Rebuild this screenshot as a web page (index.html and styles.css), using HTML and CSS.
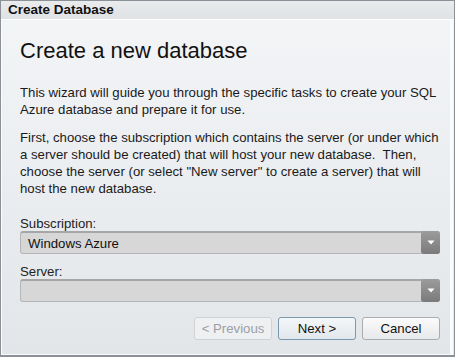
FILE: index.html
```html
<!DOCTYPE html>
<html lang="en">

<head>
    <meta charset="UTF-8">
    <title>Create Database</title>
    <link rel="stylesheet" href="styles.css">
</head>

<body>
    <div class="dialog">
        <div class="title-bar">Create Database</div>
        <div class="content">
            <h1 class="heading">Create a new database</h1>
            <p>This wizard will guide you through the specific tasks to create your SQL<br>
                Azure database and prepare it for use.</p>
            <p>First, choose the subscription which contains the server (or under which<br>
                a server should be created) that will host your new database.&nbsp; Then,<br>
                choose the server (or select "New server" to create a server) that will<br>
                host the new database.</p>

            <div class="field first">
                <label>Subscription:</label>
                <div class="dropdown">
                    <span class="value">Windows Azure</span>
                    <span class="arrow"><svg width="8" height="5" viewBox="0 0 8 5"><path d="M0.5 0.5 L7.5 0.5 L4 4.5 Z" fill="#fff"/></svg></span>
                </div>
            </div>

            <div class="field">
                <label>Server:</label>
                <div class="dropdown">
                    <span class="value"></span>
                    <span class="arrow"><svg width="8" height="5" viewBox="0 0 8 5"><path d="M0.5 0.5 L7.5 0.5 L4 4.5 Z" fill="#fff"/></svg></span>
                </div>
            </div>

            <div class="buttons">
                <button class="btn disabled">&lt; Previous</button>
                <button class="btn default">Next &gt;</button>
                <button class="btn">Cancel</button>
            </div>
        </div>
    </div>
</body>

</html>
```

FILE: styles.css
```css
body {
    margin: 0;
    padding: 0;
    font-family: "Liberation Sans", Arial, sans-serif;
    font-size: 13.2px;
    color: #1a1a1a;
}

.dialog {
    width: 455px;
    height: 357px;
    box-sizing: border-box;
    border: 1px solid #8c9198;
    border-bottom-width: 2px;
    background: linear-gradient(to bottom, #f3f5f7, #e3e6e9);
    display: flex;
    flex-direction: column;
}

.title-bar {
    height: 18px;
    line-height: 18px;
    padding-left: 7px;
    font-weight: bold;
    font-size: 13.5px;
    color: #111;
    background: linear-gradient(to bottom, #e9ebed, #dfe2e5);
    border-bottom: 1px solid #fff;
}

.content {
    flex: 1;
    padding: 0 10px 0 18px;
    border-left: 1px solid #fafbfc;
    border-right: 3px solid #fafbfc;
    border-bottom: 1px solid #fafbfc;
    margin-right: 1px;
    display: flex;
    flex-direction: column;
}

.heading {
    font-weight: normal;
    font-size: 22px;
    margin: 18px 0 0;
    line-height: 26px;
    color: #111;
    white-space: nowrap;
}

p {
    margin: 0;
    line-height: 17px;
    white-space: nowrap;
}

.heading + p {
    margin-top: 20px;
}

p + p {
    margin-top: 11px;
}

.field.first {
    margin-top: 19px;
}

.field {
    margin-top: 10px;
}

.field label {
    display: block;
    line-height: 15px;
    color: #222;
}

.dropdown {
    height: 23px;
    box-sizing: border-box;
    border: 1px solid #b5b5b5;
    border-top: 2px solid #a6a6a6;
    border-radius: 3px;
    background: #d7d7d7;
    display: flex;
    align-items: center;
    width: 420px;
}

.dropdown .value {
    flex: 1;
    padding-left: 7px;
    color: #111;
}

.dropdown .arrow {
    width: 19px;
    height: 23px;
    margin: -2px -1px -1px 0;
    border-radius: 3px;
    background: linear-gradient(to bottom, #9c9c9c, #7a7a7a);
    display: flex;
    align-items: center;
    justify-content: center;
}

.buttons {
    margin-top: 15px;
    display: flex;
    justify-content: flex-end;
    gap: 6px;
}

.btn {
    width: 78px;
    height: 23px;
    font-family: inherit;
    font-size: 13.2px;
    color: #111;
    border: 1px solid #a9acb0;
    border-radius: 3px;
    background: linear-gradient(to bottom, #fbfbfb, #e7e8ea);
    padding: 0;
}

.btn.default {
    border-color: #7c98ad;
    background: linear-gradient(to bottom, #f4f7f9, #e1e7ec);
}

.btn.disabled {
    color: #9aa0a6;
    border-color: #d0d3d6;
    background: #eef0f2;
}
```
